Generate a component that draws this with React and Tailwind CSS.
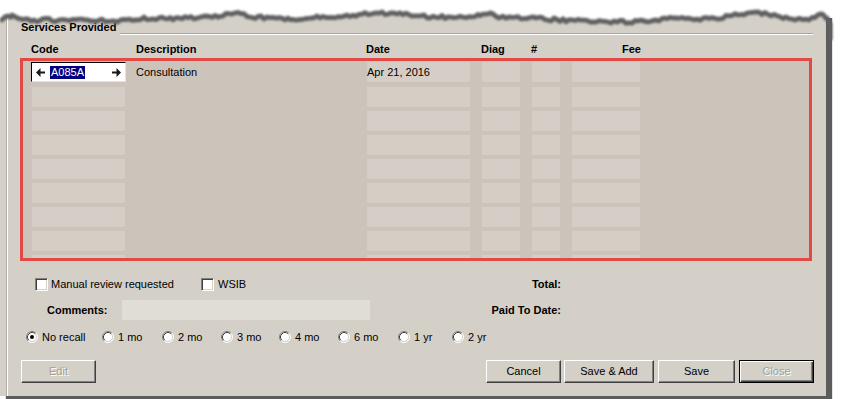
import React from 'react';

// torn-paper edge across the top of the screenshot
const ridge = [
  [0, 22], [5, 17], [12, 16], [22, 19], [34, 21], [46, 19], [58, 21], [70, 21], [90, 20],
  [120, 21], [135, 19], [150, 18], [170, 19], [200, 17], [220, 16], [238, 12], [252, 17], [290, 19],
  [320, 17], [350, 16], [370, 13], [400, 14], [430, 17], [460, 17], [480, 15], [490, 12],
  [500, 17], [530, 18], [560, 20], [590, 21], [620, 22], [650, 21], [670, 18], [700, 19],
  [720, 18], [735, 15], [750, 13], [765, 13], [780, 18], [800, 20], [812, 18], [818, 15],
  [823, 15], [827, 18],
];

function edgePoints() {
  const pts = [];
  for (let i = 0; i < ridge.length - 1; i++) {
    const [x0, y0] = ridge[i];
    const [x1, y1] = ridge[i + 1];
    for (let x = x0; x < x1; x += 3) {
      const t = (x - x0) / (x1 - x0);
      const n = Math.sin(x * 12.9898) * 43758.5453;
      const f = n - Math.floor(n);
      pts.push([x, y0 + (y1 - y0) * t + (f - 0.5) * 3.2]);
    }
  }
  pts.push(ridge[ridge.length - 1]);
  return pts;
}

function TornEdge() {
  const pts = edgePoints();
  const line = 'M' + pts.map(([x, y]) => `${x},${y.toFixed(1)}`).join(' L') + ' L830,24 L830,40';
  const rev = [...pts].reverse().map(([x, y]) => `${x},${y.toFixed(1)}`).join(' L');
  const fill = `M0,0 L841,0 L841,40 L834,40 L834,18 L${rev} Z`;
  return (
    <svg width="841" height="42" className="absolute left-0 top-0 pointer-events-none">
      <defs>
        <filter id="soft" x="-5%" y="-50%" width="110%" height="200%">
          <feGaussianBlur stdDeviation="0.8" />
        </filter>
      </defs>
      <path d={fill} fill="#fff" />
      <path d={line} fill="none" stroke="#606060" strokeWidth="4.8" strokeLinejoin="round" filter="url(#soft)" />
    </svg>
  );
}

function Arrow({ dir }) {
  return (
    <svg width="9" height="9" viewBox="0 0 9 9" className="shrink-0">
      {dir === 'left' ? (
        <path d="M0 4.5 L4.5 0 L4.5 3.5 L9 3.5 L9 5.5 L4.5 5.5 L4.5 9 Z" fill="#1a1a1a" />
      ) : (
        <path d="M9 4.5 L4.5 0 L4.5 3.5 L0 3.5 L0 5.5 L4.5 5.5 L4.5 9 Z" fill="#1a1a1a" />
      )}
    </svg>
  );
}

function Radio({ checked }) {
  return (
    <svg width="12" height="12" viewBox="0 0 12 12" className="shrink-0">
      <circle cx="6" cy="6" r="5" fill="#fff" />
      <path d="M2.11 9.89 A5.5 5.5 0 0 1 9.89 2.11" fill="none" stroke="#808080" />
      <path d="M9.89 2.11 A5.5 5.5 0 0 1 2.11 9.89" fill="none" stroke="#fff" />
      <path d="M2.82 9.18 A4.5 4.5 0 0 1 9.18 2.82" fill="none" stroke="#404040" />
      <path d="M9.18 2.82 A4.5 4.5 0 0 1 2.82 9.18" fill="none" stroke="#d4d0c8" />
      {checked && <circle cx="6" cy="6" r="2" fill="#000" />}
    </svg>
  );
}

function Checkbox() {
  return (
    <div className="w-[13px] h-[13px] shrink-0 bg-white border border-t-[#808080] border-l-[#808080] border-r-white border-b-white shadow-[inset_1px_1px_#404040,inset_-1px_-1px_#d4d0c8]" />
  );
}

function Btn({ children, className = '', disabled, isDefault }) {
  const frame = isDefault
    ? 'border border-black shadow-[inset_1px_1px_#fff,inset_-1px_-1px_#404040,inset_-2px_-2px_#808080]'
    : 'border border-t-white border-l-white border-r-[#404040] border-b-[#404040] shadow-[inset_-1px_-1px_#808080]';
  const text = disabled ? 'text-[#a19e96] [text-shadow:1px_1px_0_#fff]' : 'text-black';
  return (
    <div className={`h-[23px] bg-[#d4d0c8] flex items-center justify-center ${frame} ${text} ${className}`}>
      {children}
    </div>
  );
}

const recall = [
  { label: 'No recall', w: 'w-[76px]', checked: true },
  { label: '1 mo', w: 'w-[60px]' },
  { label: '2 mo', w: 'w-[59px]' },
  { label: '3 mo', w: 'w-[58px]' },
  { label: '4 mo', w: 'w-[59px]' },
  { label: '6 mo', w: 'w-[60px]' },
  { label: '1 yr', w: 'w-[54px]' },
  { label: '2 yr', w: 'w-[50px]' },
];

function GridRow({ index }) {
  const first = index === 0;
  return (
    <div className={`flex h-[20px] shrink-0 leading-[20px] ${first ? '' : index === 1 ? 'mt-[5px]' : 'mt-[4px]'}`}>
      <div className="ml-[8px] w-[95px] h-full">
        {first ? (
          <div className="h-full bg-white border border-t-black border-l-black border-r-[#e6e4de] border-b-[#e6e4de] flex items-center pl-[4px] pr-[4px]">
            <Arrow dir="left" />
            <span className="ml-[5px] bg-[#000080] text-white leading-[13px] px-[1px]">A085A</span>
            <div className="ml-auto">
              <Arrow dir="right" />
            </div>
          </div>
        ) : (
          <div className="mx-[1px] h-full bg-[#d5cec7]" />
        )}
      </div>
      <div className="w-[241px] pl-[10px]">{first ? 'Consultation' : ''}</div>
      <div className="w-[103px] bg-[#d5cec7]">{first ? 'Apr 21, 2016' : ''}</div>
      <div className="ml-[12px] w-[38px] bg-[#d5cec7]" />
      <div className="ml-[12px] w-[28px] bg-[#d5cec7]" />
      <div className="ml-[12px] w-[68px] bg-[#d5cec7]" />
    </div>
  );
}

export default function App() {
  return (
    <div className="w-[841px] h-[399px] bg-white overflow-hidden relative font-['Liberation_Sans',Arial,sans-serif] text-[11px] text-black">
      <div className="w-[826px] h-[396px] bg-[#d4d0c8] shadow-[6px_3px_1px_#5c5c5c]">
        <div className="h-full ml-[6px] border-l border-[#b3afa7]">
          <div className="h-full border-l border-white flex flex-col">
            {/* group title */}
            <div className="mt-[20px] h-[14px] flex items-start pl-[13px] mr-[13px]">
              <span className="font-bold leading-[14px] whitespace-nowrap">Services Provided</span>
              <div className="ml-[4px] mt-[13px] flex-1 h-[2px] border-t border-[#a8a59e] border-b border-b-white" />
            </div>

            {/* column headers */}
            <div className="mt-[8px] h-[14px] flex leading-[14px] font-bold pl-[23px]">
              <div className="w-[105px]">Code</div>
              <div className="w-[230px]">Description</div>
              <div className="w-[115px]">Date</div>
              <div className="w-[50px]">Diag</div>
              <div className="w-[40px]">#</div>
              <div className="w-[70px] text-right">Fee</div>
            </div>

            {/* services grid */}
            <div className="mt-[2px] ml-[12px] w-[792px] h-[203px] shrink-0 border-[3px] border-[#e34a45] bg-[#ccc4bb] overflow-hidden pt-[1px] flex flex-col">
              {Array.from({ length: 9 }).map((_, i) => (
                <GridRow key={i} index={i} />
              ))}
            </div>

            {/* flags + total */}
            <div className="mt-[16px] h-[14px] flex items-center pl-[27px]">
              <div className="w-[166px] flex items-center gap-[3px]">
                <Checkbox />
                <span>Manual review requested</span>
              </div>
              <div className="w-[260px] flex items-center gap-[4px]">
                <Checkbox />
                <span>WSIB</span>
              </div>
              <div className="w-[100px] text-right font-bold">Total:</div>
            </div>

            {/* comments + paid */}
            <div className="mt-[9px] h-[20px] flex items-center pl-[39px]">
              <div className="w-[75px] font-bold">Comments:</div>
              <div className="w-[248px] h-[20px] bg-[#dfddd6]" />
              <div className="w-[191px] text-right font-bold">Paid To Date:</div>
            </div>

            {/* recall */}
            <div className="mt-[11px] h-[12px] flex items-center pl-[18px]">
              {recall.map((r) => (
                <div key={r.label} className={`${r.w} flex items-center gap-[4px] whitespace-nowrap`}>
                  <Radio checked={r.checked} />
                  <span>{r.label}</span>
                </div>
              ))}
            </div>

            {/* buttons */}
            <div className="mt-[17px] flex pl-[13px]">
              <Btn className="w-[75px]" disabled>Edit</Btn>
              <Btn className="ml-[390px] w-[75px]">Cancel</Btn>
              <Btn className="ml-[3px] w-[90px]">Save &amp; Add</Btn>
              <Btn className="ml-[4px] w-[77px]">Save</Btn>
              <Btn className="ml-[4px] w-[75px]" disabled isDefault>Close</Btn>
            </div>
          </div>
        </div>
      </div>
      <TornEdge />
    </div>
  );
}
